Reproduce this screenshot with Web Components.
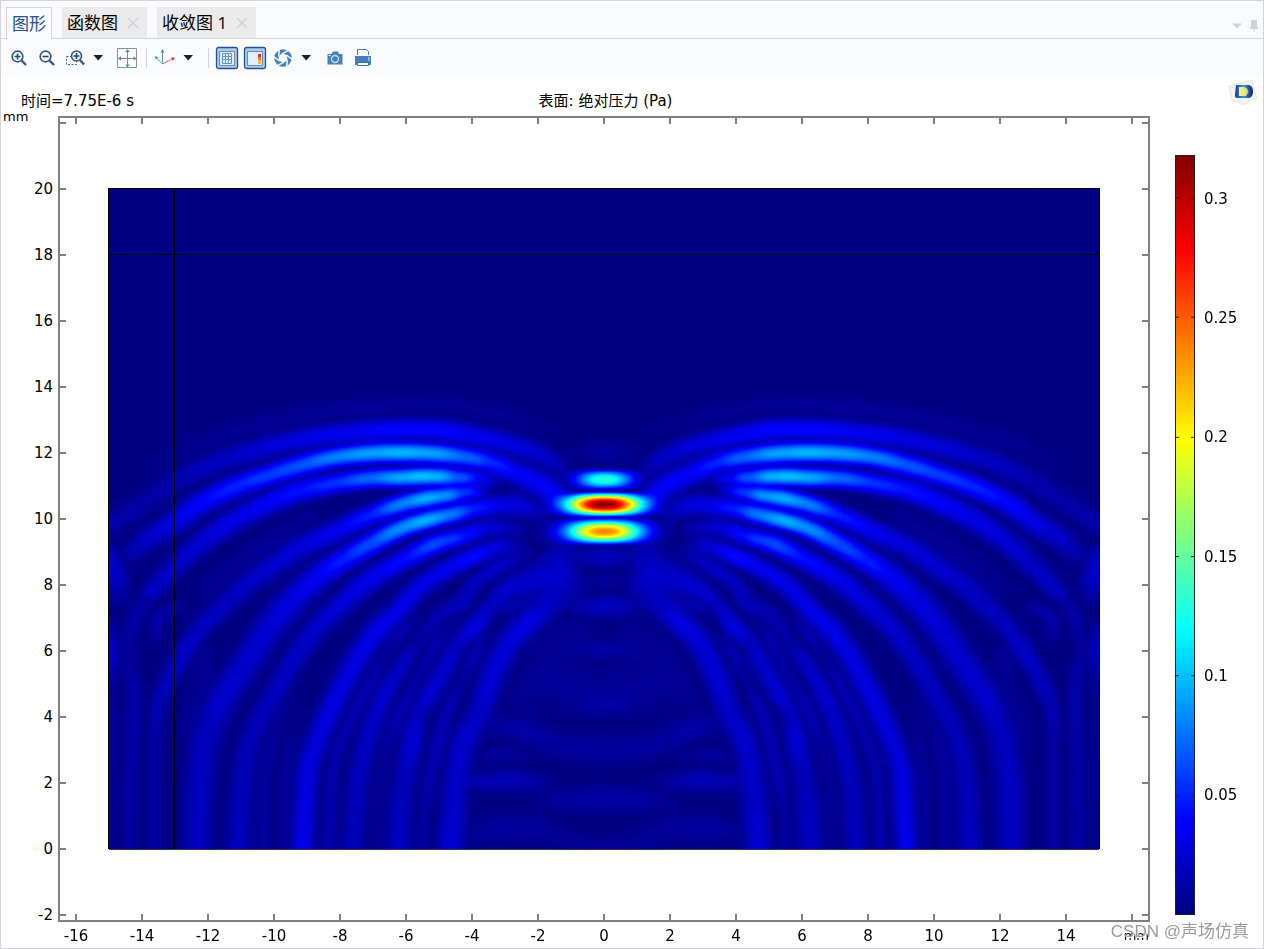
<!DOCTYPE html>
<html lang="zh-CN">
<head>
<meta charset="utf-8">
<title>图形</title>
<style>
  body {
    margin: 0;
    background: #fff;
    color: #000;
    font-family: "DejaVu Sans", "Noto Sans CJK SC", sans-serif;
  }
</style>
</head>
<body>
<graphics-window></graphics-window>

<script>
const X_TICKS = [-16, -14, -12, -10, -8, -6, -4, -2, 0, 2, 4, 6, 8, 10, 12, 14];
const Y_TICKS = [20, 18, 16, 14, 12, 10, 8, 6, 4, 2, 0, -2];
const LEGEND_TICKS = [0.3, 0.25, 0.2, 0.15, 0.1, 0.05];
const P_MAX = 0.318;

// Wave crests of the left half: [x, y, pressure in mPa, half width].
// The right half is the mirror image.
const CRESTS = [
  [[150, 466, 2, 20], [200, 442, 5, 18], [300, 415, 7, 16], [400, 404, 8, 15], [480, 410, 6, 15], [560, 432, 2, 15]],
  [[109, 524, 14, 19], [147, 500, 12, 19], [173, 483, 14, 19], [213, 463, 20, 19], [273, 445, 28, 19], [333, 434, 34, 19], [400, 429, 40, 19], [440, 430, 40, 19], [480, 437, 34, 19], [520, 447, 28, 19], [547, 458, 22, 18], [566, 472, 8, 14]],
  [[132, 552, 14, 18], [150, 537, 23, 20], [174, 522, 31, 20], [200, 503, 40, 20], [233, 487, 50, 19], [267, 475, 58, 18], [300, 465, 66, 18], [333, 457, 80, 17], [367, 453, 90, 17], [400, 452, 97, 17], [433, 453, 90, 17], [467, 457, 70, 17], [493, 463, 50, 18], [517, 473, 38, 20], [533, 480, 38, 22], [547, 488, 37, 22], [560, 498, 36, 18]],
  [[152, 590, 20, 18], [174, 567, 22, 19], [200, 543, 26, 20], [233, 520, 32, 20], [267, 503, 38, 20], [300, 490, 45, 19], [333, 483, 54, 17], [367, 478, 72, 16], [400, 477, 93, 16], [420, 476, 100, 16], [437, 476, 95, 16], [460, 477, 66, 15], [480, 478, 36, 14], [500, 481, 6, 12]],
  [[154, 849, 10, 14], [155, 750, 10, 14], [157, 707, 15, 16], [167, 683, 18, 17], [183, 653, 22, 18], [200, 628, 20, 18], [220, 608, 20, 19], [245, 585, 22, 20], [270, 567, 25, 20], [300, 547, 28, 20], [333, 532, 34, 19], [367, 516, 48, 17], [400, 504, 80, 16], [425, 498, 94, 16], [445, 495, 85, 15], [465, 492, 55, 14], [485, 490, 20, 12]],
  [[197, 849, 20, 26], [200, 773, 20, 26], [207, 733, 19, 28], [223, 697, 24, 26], [243, 667, 24, 26], [267, 630, 26, 26], [290, 602, 30, 25], [317, 577, 36, 23], [340, 561, 48, 20], [367, 545, 62, 19], [400, 528, 84, 17], [425, 520, 95, 16], [450, 514, 78, 16], [475, 508, 48, 16], [500, 505, 33, 18], [520, 505, 28, 19], [540, 513, 12, 18]],
  [[238, 849, 20, 22], [243, 773, 17, 22], [253, 733, 17, 21], [270, 700, 19, 20], [293, 660, 21, 20], [317, 627, 24, 20], [343, 602, 28, 20], [367, 581, 33, 20], [400, 561, 42, 18], [433, 544, 62, 17], [450, 539, 56, 16], [467, 534, 42, 16], [490, 527, 26, 17], [517, 529, 12, 16]],
  [[302, 849, 33, 20], [307, 773, 30, 21], [317, 740, 28, 21], [333, 703, 31, 21], [345, 680, 30, 21], [357, 658, 31, 21], [377, 630, 33, 21], [397, 611, 33, 19], [420, 586, 32, 19], [450, 567, 35, 17], [473, 556, 42, 16], [497, 547, 28, 16], [517, 543, 9, 15]],
  [[352, 849, 18, 21], [357, 787, 18, 21], [367, 740, 21, 20], [383, 697, 24, 18], [403, 663, 21, 16], [418, 643, 12, 15], [437, 616, 14, 16], [460, 603, 18, 17], [475, 582, 20, 15], [500, 565, 22, 15], [524, 551, 10, 15]],
  [[398, 849, 20, 24], [400, 810, 19, 24], [404, 780, 17, 22], [412, 740, 26, 20], [418, 713, 19, 18], [430, 693, 25, 19], [447, 663, 23, 19], [458, 642, 20, 17], [474, 627, 30, 18], [490, 606, 20, 16], [508, 590, 25, 19], [530, 580, 24, 26], [552, 570, 22, 32], [564, 552, 16, 30]],
  [[450, 849, 26, 24], [455, 787, 22, 24], [463, 743, 24, 23], [480, 710, 22, 23], [490, 680, 27, 22], [508, 643, 27, 22], [527, 623, 31, 22], [544, 606, 22, 26], [562, 584, 19, 34]],
  [[130, 849, 10, 15], [130, 770, 11, 15], [134, 700, 13, 15], [128, 650, 8, 14], [134, 618, 12, 15], [146, 596, 10, 14]],
  [[112, 849, 6, 10], [112, 700, 6, 12], [111, 653, 20, 17], [111, 625, 8, 12]],
  [[110, 555, 18, 18], [113, 572, 24, 22], [118, 592, 12, 20]],
  [[156, 635, 8, 13], [158, 618, 13, 14], [176, 606, 9, 12]],
  [[263, 849, 9, 14], [265, 767, 9, 14], [278, 722, 6, 14], [292, 690, 2, 14]],
  [[283, 849, 8, 12], [286, 767, 8, 12], [300, 710, 3, 12]],
  [[328, 849, 14, 14], [332, 773, 13, 14], [347, 727, 14, 14], [367, 687, 14, 13], [384, 655, 9, 12], [400, 634, 14, 13], [414, 618, 6, 12]],
  [[376, 849, 5, 12], [381, 770, 7, 12], [398, 716, 14, 14], [418, 677, 11, 13], [437, 641, 14, 13], [450, 622, 6, 12]],
  [[422, 849, 10, 12], [424, 815, 9, 12], [431, 772, 14, 15], [444, 720, 16, 15], [461, 682, 9, 12], [474, 655, 15, 13], [486, 636, 6, 12]],
  [[500, 611, 8, 12], [514, 606, 14, 12], [526, 601, 8, 12]],
  [[203, 655, 7, 18], [200, 690, 6, 16], [180, 730, 5, 14]],
  [[210, 590, 5, 22], [260, 548, 7, 20], [310, 516, 5, 16]],
  [[470, 781, 12, 16], [490, 781, 15, 18], [510, 780, 17, 19], [530, 781, 12, 18], [550, 783, 4, 14]],
  [[485, 758, 6, 14], [500, 753, 9, 14], [530, 757, 4, 10]],
  [[485, 724, 5, 18], [520, 729, 12, 22], [550, 742, 10, 24], [604, 752, 9, 26]],
  [[475, 832, 6, 20], [500, 828, 10, 24], [535, 829, 8, 24], [575, 842, 7, 20], [604, 849, 7, 18]],
  [[540, 800, 4, 18], [572, 799, 10, 22], [604, 799, 12, 22]],
  [[520, 700, 4, 40], [548, 680, 8, 44], [575, 690, 8, 44], [604, 690, 7, 40]],
  [[545, 650, 5, 36], [575, 640, 7, 36]],
  [[588, 705, 8, 18], [604, 705, 12, 20]],
  [[578, 650, 6, 16], [604, 650, 12, 18]],
  [[572, 606, 6, 18], [588, 606, 16, 19], [604, 606, 20, 20]],
  [[582, 581, 4, 14], [604, 581, 9, 16]],
  [[578, 557, 5, 15], [590, 557, 15, 17], [604, 557, 20, 18]],
  [[575, 452, 3, 18], [604, 452, 10, 20]]
];

// Focal spots on the axis: centre y, pressure, horizontal and vertical reach
const SPOTS = [
  { y: 479, p: 0.134, rx: 28, ry: 12 },
  { y: 504, p: 0.318, rx: 38, ry: 14 },
  { y: 531, p: 0.238, rx: 38, ry: 15 }
];

function jet(t) {
  const channel = (centre) => {
    const v = 1.5 - Math.abs(4 * t - centre);
    return Math.round(255 * Math.max(0, Math.min(1, v)));
  };
  return [channel(3), channel(2), channel(1)];
}

function spline(a, b, c, d, t) {
  return 0.5 * (2 * b + (c - a) * t + (2 * a - 5 * b + 4 * c - d) * t * t + (3 * b - a - 3 * c + d) * t * t * t);
}

function pressureField(width, height) {
  const half = width / 2 + 1;
  const field = new Float32Array(half * height).fill(0.0015 ** 2);
  const layer = new Float32Array(half * height);

  const stamp = (x, y, p, w) => {
    const x0 = Math.max(0, Math.ceil(x - w));
    const x1 = Math.min(half - 1, Math.floor(x + w));
    const y0 = Math.max(0, Math.ceil(y - w));
    const y1 = Math.min(height - 1, Math.floor(y + w));
    for (let j = y0; j <= y1; j++) {
      for (let i = x0; i <= x1; i++) {
        const d = Math.hypot(i - x, j - y) / w;
        if (d >= 1) continue;
        const v = p * (0.5 + 0.5 * Math.cos(Math.PI * d));
        const k = j * half + i;
        if (v > layer[k]) layer[k] = v;
      }
    }
  };

  // crests add up by energy, so crossing ones melt into each other
  const addLayer = () => {
    for (let k = 0; k < layer.length; k++) field[k] += layer[k] * layer[k];
    layer.fill(0);
  };

  for (const crest of CRESTS) {
    for (let n = 0; n < crest.length - 1; n++) {
      const b = crest[n];
      const c = crest[n + 1];
      const a = crest[n - 1] || b;
      const d = crest[n + 2] || c;
      const steps = Math.ceil(Math.hypot(c[0] - b[0], c[1] - b[1]) / 1.5);
      for (let s = 0; s <= steps; s++) {
        const t = s / steps;
        const e = t * t * (3 - 2 * t);
        stamp(
          spline(a[0], b[0], c[0], d[0], t) - 109,
          spline(a[1], b[1], c[1], d[1], t) - 189,
          (b[2] + (c[2] - b[2]) * e) / 1000,
          b[3] + (c[3] - b[3]) * e
        );
      }
    }
    addLayer();
  }

  for (const spot of SPOTS) {
    const cy = spot.y - 189;
    for (let j = cy - spot.ry; j <= cy + spot.ry; j++) {
      const vertical = Math.pow(Math.cos((Math.PI / 2) * (j - cy) / spot.ry), 1.2);
      for (let i = half - 90; i < half; i++) {
        layer[j * half + i] = spot.p * vertical * Math.exp(-Math.pow((half - 1 - i) / spot.rx, 2.3));
      }
    }
    addLayer();
  }
  return { field: field.map(Math.sqrt), half };
}

class TabItem extends HTMLElement {
  constructor() {
    super();
    this.attachShadow({ mode: 'open' });
  }

  connectedCallback() {
    const active = this.hasAttribute('active');
    this.shadowRoot.innerHTML = `
    <style>
      :host {
        display: flex;
        align-items: center;
        box-sizing: border-box;
        height: 31px;
        padding: 0 5px;
        background: #ebebeb;
      }
      :host([active]) {
        height: 32px;
        margin-bottom: -1px;
        border: 1px solid #d4d4d8;
        border-bottom: 0;
        background: #fafbff;
      }
      button {
        padding: 0;
        border: 0;
        background: none;
        color: #000;
        font: 17px/24px "Open Sans", "Noto Sans CJK SC", sans-serif;
        white-space: nowrap;
      }
      :host([active]) button { color: #264f95; }
      .close {
        display: flex;
        margin-left: 9px;
        margin-right: 3px;
      }
    </style>
    <button type="button" role="tab" aria-selected="${active}"><slot></slot></button>
    ${active ? '' : `<button class="close" type="button" aria-label="关闭">
      <svg width="12" height="12" viewBox="0 0 12 12"><path d="M1 1L11 11M11 1L1 11" stroke="#ccd3de" stroke-width="1.5"/></svg>
    </button>`}
    `;
  }
}
customElements.define('tab-item', TabItem);

class TabBar extends HTMLElement {
  constructor() {
    super();
    this.attachShadow({ mode: 'open' }).innerHTML = `
    <style>
      :host {
        display: flex;
        align-items: flex-end;
        height: 37px;
        padding: 0 4px 0 5px;
        border-bottom: 1px solid #d4d4d8;
        background: #fafbff;
      }
      .tabs { display: flex; gap: 10px; flex: 1; align-items: flex-end; }
      .tools { display: flex; gap: 6px; padding-bottom: 5px; align-items: center; }
      button { display: flex; padding: 0; border: 0; background: none; }
    </style>
    <div class="tabs" role="tablist"><slot></slot></div>
    <div class="tools">
      <button type="button" aria-label="窗口菜单"><svg width="12" height="14" viewBox="0 0 12 14"><path d="M1 4.500h10L6 9.500z" fill="#ccd3de"/></svg></button>
      <button type="button" aria-label="固定"><svg width="10" height="14" viewBox="0 0 10 14"><path d="M2 1h6v7h1v2H5.500v3h-1v-3H1V8h1z" fill="#ccd3de"/></svg></button>
    </div>
    `;
  }
}
customElements.define('tab-bar', TabBar);

const ICONS = {
  'zoom-in': `<circle cx="10.500" cy="10.500" r="5.300" fill="#fff" stroke="#34587f" stroke-width="1.700"/>
    <path d="M14.500 14.500L19 19" stroke="#34587f" stroke-width="2.400"/><path d="M7.500 10.500h6M10.500 7.500v6" stroke="#1f4675" stroke-width="1.600"/>`,
  'zoom-out': `<circle cx="10.500" cy="10.500" r="5.300" fill="#fff" stroke="#34587f" stroke-width="1.700"/>
    <path d="M14.500 14.500L19 19" stroke="#34587f" stroke-width="2.400"/><path d="M7.500 10.500h6" stroke="#1f4675" stroke-width="1.600"/>`,
  'zoom-box': `<path d="M3.500 10.500h10v8h-10z" fill="none" stroke="#3a6398" stroke-dasharray="2 1.500"/>
    <circle cx="13.500" cy="10" r="5" fill="#f4f6fb" stroke="#34587f" stroke-width="1.600"/>
    <path d="M17 14L21 18.500" stroke="#34587f" stroke-width="2.400"/><path d="M10.500 10h6M13.500 7v6" stroke="#1f4675" stroke-width="1.600"/>`,
  'extents': `<path d="M2.500 2.500h19v19h-19z" fill="#fff" stroke="#8f8f8f"/>
    <path d="M12.500 5v15M5 12.500h15" stroke="#888"/>
    <path d="M12.500 3l2.300 3h-4.600zM12.500 21.500l2.300-3h-4.600zM3 12.500l3-2.300v4.600zM21.500 12.500l-3-2.300v4.600z" fill="#4a8ac4"/>`,
  'axes': `<path d="M9.500 18V5" stroke="#5b92c8"/><path d="M9.500 3l1.800 3.500H7.700z" fill="#3f80c0"/>
    <path d="M9.500 18L4 12.500" stroke="#63b45b"/><path d="M1.500 10l4 1.200L3 13.500z" fill="#46a33e"/>
    <path d="M9.500 18L19 13" stroke="#e05a84"/><path d="M22 11.500l-2.300 3.200-1.600-3z" fill="#d91c58"/>`,
  'grid': `<rect x="1.500" y="1.500" width="21" height="21" rx="2" fill="#a9cdf0" stroke="#244f91" stroke-width="1.300"/>
    <path d="M4.500 5.500h15v14h-15z" fill="#e0effd" stroke="#7a8796"/>
    <path d="M10.500 7v11M13.500 7v11M7 10.500h10M7 13.500h10" stroke="#5f97cf"/><path d="M7.500 7.500h9v10h-9z" fill="none" stroke="#5f97cf"/>`,
  'legend': `<rect x="1.500" y="1.500" width="21" height="21" rx="2" fill="#a9cdf0" stroke="#244f91" stroke-width="1.300"/>
    <path d="M4.500 5.500h15v14h-15z" fill="#e0effd" stroke="#7a8796"/>
    <path d="M15 8h3v3h-3z" fill="#c23a52"/><path d="M15 11h3v3h-3z" fill="#f07a38"/><path d="M15 14h3v4h-3z" fill="#f6b84a"/>`,
  'scene': `<circle cx="12" cy="12" r="6.500" fill="none" stroke="#4681bb" stroke-width="4.500"/>
    <path d="M11 7.800L18 4.200M15.200 9L21.500 13.500M16.200 13.500L15.800 21M13 16.200L6 19.800M8.800 15L2.500 10.500M7.800 10.500L8.200 3" stroke="#fafbff" stroke-width="1.500"/>`,
  'camera': `<path d="M4.500 8h4l1.500-2.500h5L16 8h3.500v10.500h-15z" fill="#4580ba"/><circle cx="12" cy="13" r="3.500" fill="none" stroke="#c9dcef" stroke-width="1.400"/>
    <path d="M5.500 9.500h2" stroke="#fff"/>`,
  'print': `<path d="M6.500 9V3.500h9l2 2V9" fill="#fff" stroke="#4580ba"/><path d="M4 10h16v9H4z" fill="#4580ba"/>
    <path d="M6.500 16.500h11v3h-11z" fill="#fff" stroke="#376ea6"/><path d="M17 12h1.500M17 14h1.500" stroke="#fff"/>`
};

class ToolButton extends HTMLElement {
  constructor() {
    super();
    this.attachShadow({ mode: 'open' });
  }

  connectedCallback() {
    this.shadowRoot.innerHTML = `
    <style>
      :host { display: block; }
      button { display: flex; padding: 0; border: 0; background: none; }
    </style>
    <button type="button" aria-label="${this.getAttribute('label')}">
      <svg width="24" height="24" viewBox="0 0 24 24">${ICONS[this.getAttribute('icon')]}</svg>
    </button>
    `;
  }
}
customElements.define('tool-button', ToolButton);

class DropArrow extends HTMLElement {
  constructor() {
    super();
    this.attachShadow({ mode: 'open' }).innerHTML = `
    <style>
      :host { display: block; margin-right: 6px; }
      button { display: flex; padding: 0; border: 0; background: none; }
    </style>
    <button type="button" aria-label="更多">
      <svg width="14" height="14" viewBox="0 0 14 14"><path d="M2.500 4h9.500L7.200 9.500z" fill="#1e1e1e"/></svg>
    </button>
    `;
  }
}
customElements.define('drop-arrow', DropArrow);

class PlotToolbar extends HTMLElement {
  constructor() {
    super();
    this.attachShadow({ mode: 'open' }).innerHTML = `
    <style>
      :host {
        display: flex;
        align-items: center;
        gap: 4px;
        height: 35px;
        padding: 3px 6px 0;
        box-sizing: border-box;
        background: #fafbff;
      }
      hr { width: 1px; height: 20px; margin: 0 2px 0 3px; border: 0; background: #d0d3d9; }
    </style>
    <tool-button icon="zoom-in" label="放大"></tool-button>
    <tool-button icon="zoom-out" label="缩小"></tool-button>
    <tool-button icon="zoom-box" label="框选缩放"></tool-button>
    <drop-arrow></drop-arrow>
    <tool-button icon="extents" label="缩放到窗口大小"></tool-button>
    <hr>
    <tool-button icon="axes" label="默认视图"></tool-button>
    <drop-arrow></drop-arrow>
    <hr>
    <tool-button icon="grid" label="显示栅格"></tool-button>
    <tool-button icon="legend" label="显示图例"></tool-button>
    <tool-button icon="scene" label="场景"></tool-button>
    <drop-arrow></drop-arrow>
    <tool-button icon="camera" label="图像快照"></tool-button>
    <tool-button icon="print" label="打印"></tool-button>
    `;
  }
}
customElements.define('plot-toolbar', PlotToolbar);

class PressureMap extends HTMLElement {
  constructor() {
    super();
    this.attachShadow({ mode: 'open' }).innerHTML = `
    <style>
      :host { display: grid; min-width: 0; min-height: 0; }
      canvas, svg { grid-area: 1 / 1; width: 100%; height: 100%; min-width: 0; min-height: 0; display: block; }
      svg { overflow: visible; }
      path { fill: none; stroke: #000; vector-effect: non-scaling-stroke; }
    </style>
    <canvas width="990" height="660"></canvas>
    <svg viewBox="0 0 990 660" preserveAspectRatio="none">
      <path d="M-.5 -1V660M-1 -.5H991M990.500 -1V660"/>
      <path d="M0 660.500H990" style="stroke:#333344"/>
      <path d="M65.500 0V660M0 65.500H990"/>
      <path d="M924.500 0V660" style="stroke:#00006c"/>
    </svg>
    `;
    this.draw(this.shadowRoot.querySelector('canvas'));
  }

  draw(canvas) {
    const { width, height } = canvas;
    const ctx = canvas.getContext('2d');
    const image = ctx.createImageData(width, height);
    const { field, half } = pressureField(width, height);
    for (let y = 0; y < height; y++) {
      for (let x = 0; x < width; x++) {
        const v = field[y * half + Math.min(x, width - x)];
        const [r, g, b] = jet(v / P_MAX);
        const k = (y * width + x) * 4;
        image.data[k] = r;
        image.data[k + 1] = g;
        image.data[k + 2] = b;
        image.data[k + 3] = 255;
      }
    }
    ctx.putImageData(image, 0, 0);
  }
}
customElements.define('pressure-map', PressureMap);

class PlotAxes extends HTMLElement {
  constructor() {
    super();
    let ticks = '';
    for (let x = 17; x < 1090; x += 66) ticks += `M${x} 0v7M${x} 804v-7`;
    for (let y = 6; y < 804; y += 66) ticks += `M0 ${y}h7M1090 ${y}h-7`;

    this.attachShadow({ mode: 'open' }).innerHTML = `
    <style>
      :host {
        display: grid;
        grid-template-columns: 58px minmax(0, 1fr);
        grid-template-rows: minmax(0, 1fr) 27px;
        min-height: 0;
        font-size: 15px;
        line-height: 18px;
      }
      .y {
        display: grid;
        grid-template-rows: minmax(0, 6fr) repeat(12, minmax(0, 66fr)) minmax(0, 6fr);
        justify-items: end;
        padding-right: 6px;
      }
      .y span { align-self: end; transform: translateY(50%); }
      .y .unit { justify-self: start; padding-left: 2px; line-height: 12px; transform: none; }
      .x {
        grid-column: 2;
        display: grid;
        grid-template-columns: minmax(0, 17fr) repeat(16, minmax(0, 66fr)) minmax(0, 17fr);
        padding-top: 6px;
      }
      .x span { justify-self: end; transform: translateX(50%); }
      .x .unit { grid-column: -2; transform: none; }
      .unit { font-size: 13px; }
      .frame {
        display: grid;
        grid-template-columns: minmax(0, 50fr) minmax(0, 990fr) minmax(0, 50fr);
        grid-template-rows: minmax(0, 72fr) minmax(0, 660fr) minmax(0, 72fr);
      }
      .frame svg { grid-area: 1 / 1 / -1 / -1; width: 100%; height: 100%; min-height: 0; overflow: visible; }
      .frame path { fill: none; stroke: #808080; stroke-width: 2; vector-effect: non-scaling-stroke; }
      pressure-map { grid-area: 2 / 2; }
    </style>
    <div class="y"><span class="unit">mm</span>${Y_TICKS.map((t) => `<span>${t}</span>`).join('')}</div>
    <div class="frame">
      <svg viewBox="0 0 1090 804" preserveAspectRatio="none"><path d="M0 0H1090V804H0Z${ticks}"/></svg>
      <pressure-map></pressure-map>
    </div>
    <div class="x">${X_TICKS.map((t) => `<span>${t}</span>`).join('')}<span class="unit">mm</span></div>
    `;
  }
}
customElements.define('plot-axes', PlotAxes);

class ColorLegend extends HTMLElement {
  constructor() {
    super();
    const marks = LEGEND_TICKS.map((t) => {
      const y = Math.round(759 * (1 - t / P_MAX));
      return `M0 ${y}h4M20 ${y}h-4`;
    }).join('');

    this.attachShadow({ mode: 'open' }).innerHTML = `
    <style>
      :host {
        display: flex;
        gap: 9px;
        min-height: 0;
        font-size: 15px;
        line-height: 18px;
      }
      .bar {
        width: 20px;
        background: linear-gradient(#800000, #f00 12.5%, #ff0 37.5%, #0ff 62.5%, #00f 87.5%, #000080);
      }
      svg { display: block; width: 100%; height: 100%; }
      path { fill: none; stroke: #202020; vector-effect: non-scaling-stroke; }
      .labels {
        display: grid;
        grid-template-rows: minmax(0, 44fr) repeat(5, minmax(0, 119fr)) minmax(0, 120fr);
      }
      .labels span { align-self: end; transform: translateY(50%); }
    </style>
    <div class="bar"><svg viewBox="0 0 20 759" preserveAspectRatio="none"><path d="M.5 .5H19.500V758.500H.5Z${marks}"/></svg></div>
    <div class="labels">${LEGEND_TICKS.map((t) => `<span>${t}</span>`).join('')}</div>
    `;
  }
}
customElements.define('color-legend', ColorLegend);

class GraphicsWindow extends HTMLElement {
  constructor() {
    super();
    this.attachShadow({ mode: 'open' }).innerHTML = `
    <style>
      :host {
        position: relative;
        display: flex;
        flex-direction: column;
        box-sizing: border-box;
        height: 100vh;
        min-height: 480px;
        border: 1px solid #d4d4d8;
      }
      header {
        display: grid;
        grid-template-columns: 1fr auto 1fr;
        align-items: end;
        height: 43px;
        padding-right: 5px;
        font-size: 15px;
        line-height: 20px;
      }
      header span { padding-bottom: 6px; }
      .time { padding-left: 20px; }
      .title { padding-right: 48px; }
      .logo { justify-self: end; align-self: start; padding-top: 5px; }
      main {
        flex: 1;
        display: grid;
        grid-template-columns: minmax(0, 1fr) 88px;
        gap: 26px;
        min-height: 0;
      }
      color-legend { margin: 38px 0 33px; }
      .watermark {
        position: absolute;
        right: 14px;
        bottom: 4px;
        color: #9b9b9b;
        font: 17px/24px "Liberation Sans", "Noto Sans CJK SC", sans-serif;
        text-shadow: 1px 1px 0 #fff;
      }
    </style>
    <tab-bar>
      <tab-item active>图形</tab-item>
      <tab-item>函数图</tab-item>
      <tab-item>收敛图 1</tab-item>
    </tab-bar>
    <plot-toolbar></plot-toolbar>
    <header>
      <span class="time">时间=7.75E-6 s</span>
      <span class="title">表面: 绝对压力 (Pa)</span>
      <svg class="logo" width="30" height="28" viewBox="0 0 30 28">
        <defs>
          <linearGradient id="face" x1="0" x2="1"><stop offset="0" stop-color="#16409a"/><stop offset=".5" stop-color="#3f95dc"/><stop offset="1" stop-color="#0c1d62"/></linearGradient>
          <linearGradient id="glow" x1="0" x2="1"><stop offset="0" stop-color="#fff27a"/><stop offset=".7" stop-color="#e6e27a"/><stop offset="1" stop-color="#7fc6d8"/></linearGradient>
        </defs>
        <path d="M1 7L24 1L25 6L29 19L15 26L4 21Z" fill="#f3f3f4" stroke="#e6e6e6"/>
        <path d="M8 6H21Q25 7 25 12.500T21 19H9Q6.500 19 7 15Z" fill="url(#face)"/>
        <path d="M11 8H16Q20 9 20.500 13L18 17H11Z" fill="url(#glow)"/>
      </svg>
    </header>
    <main>
      <plot-axes></plot-axes>
      <color-legend></color-legend>
    </main>
    <div class="watermark">CSDN @声场仿真</div>
    `;
  }
}
customElements.define('graphics-window', GraphicsWindow);
</script>
</body>
</html>
